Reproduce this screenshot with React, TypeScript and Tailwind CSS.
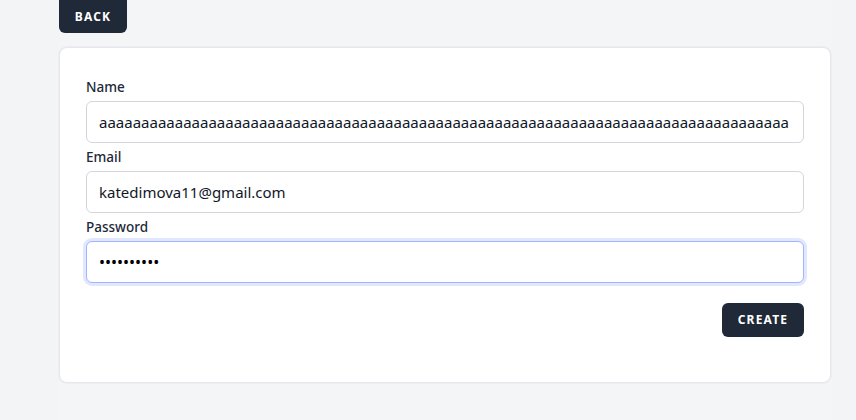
export default function App() {
	const font = { fontFamily: '"Noto Sans", "Open Sans", sans-serif' };
	return (
		<div className="min-h-[420px] bg-[#f3f4f6]" style={font}>
			<div className="ml-[59px] w-[773px] min-h-[420px] bg-[#f4f5f7]">
				<button className="h-[33px] w-[68px] rounded-b-md bg-[#1f2937] text-[12px] font-bold tracking-widest text-white">
					BACK
				</button>
				<div className="mt-[14px] mr-[1px] rounded-lg border border-gray-200 bg-white px-[26px] pt-[29px] pb-[45px] shadow-[0_0_0_1px_#eceef1]">
					<form className="flex flex-col gap-1">
						<label className="text-[13.5px] leading-5 font-medium text-gray-800">Name</label>
						<input
							readOnly
							value={"a".repeat(82)}
							className="h-[42px] w-full rounded-md border border-gray-300 bg-white px-3 text-[15px] text-gray-900 outline-none"
						/>
						<label className="text-[13.5px] leading-5 font-medium text-gray-800">Email</label>
						<input
							readOnly
							value="katedimova11@gmail.com"
							className="h-[42px] w-full rounded-md border border-gray-300 bg-white px-3 text-[15px] text-gray-900 outline-none"
						/>
						<label className="text-[13.5px] leading-5 font-medium text-gray-800">Password</label>
						<input
							readOnly
							type="password"
							value="1234567890"
							className="h-[42px] w-full rounded-md border border-indigo-300 bg-white px-3 text-[16px] text-black outline-none ring-3 ring-indigo-100"
						/>
						<div className="mt-4 flex justify-end">
							<button
								type="button"
								className="h-[34px] w-[82px] rounded-md bg-[#1f2937] text-[12px] font-bold tracking-widest text-white"
							>
								CREATE
							</button>
						</div>
					</form>
				</div>
			</div>
		</div>
	);
}
